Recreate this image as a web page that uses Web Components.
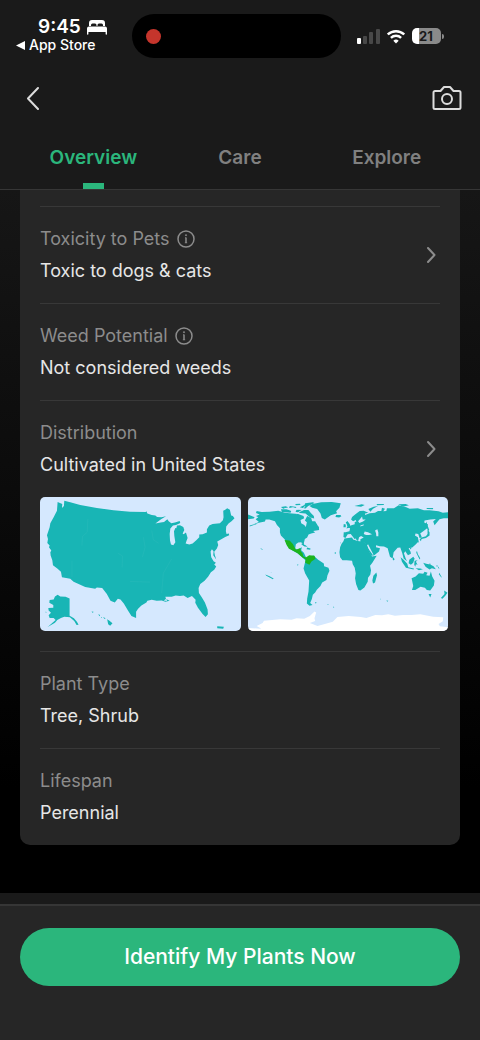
<!DOCTYPE html>
<html lang="en">
<head>
<meta charset="utf-8">
<meta name="viewport" content="width=device-width, initial-scale=1">
<title>Plant overview</title>
<style>
  body {
    margin: 0;
    background: #000;
    color: #e6e6e6;
    font-family: Inter, "Liberation Sans", sans-serif;
  }
</style>
</head>
<body>
<plant-page></plant-page>

<script>
const define = (name, html, setup) => {
  const template = document.createElement('template')
  template.innerHTML = html
  customElements.define(name, class extends HTMLElement {
    constructor () {
      super()
      this.attachShadow({ mode: 'open' })
      this.shadowRoot.appendChild(template.content.cloneNode(true))
    }

    connectedCallback () {
      if (setup) setup(this, this.shadowRoot)
    }
  })
}

define('status-bar', `
  <style>
    :host {
      display: grid;
      grid-template-columns: 1fr 209px 1fr;
      padding: 14px 8px 0 0;
      color: #fff;
    }
    .left {
      padding: 3px 0 0 16px;
    }
    .time {
      display: flex;
      align-items: center;
      gap: 6px;
      padding-left: 22px;
      font-size: 19px;
      font-weight: 600;
      line-height: 20px;
    }
    .back-app {
      display: flex;
      align-items: center;
      gap: 4px;
      font-size: 14px;
      font-weight: 500;
      line-height: 16px;
      color: inherit;
      text-decoration: none;
      white-space: nowrap;
    }
    .island {
      display: flex;
      align-items: center;
      height: 44px;
      padding-left: 14px;
      box-sizing: border-box;
      border-radius: 22px;
      background: #000;
    }
    .dot {
      width: 15px;
      height: 15px;
      border-radius: 50%;
      background: #c5352c;
    }
    .right {
      display: flex;
      align-items: center;
      gap: 7px;
      height: 44px;
      padding-left: 16px;
    }
    .battery {
      display: flex;
      align-items: center;
      gap: 1px;
    }
    .level {
      width: 29px;
      border-radius: 5px;
      background: linear-gradient(90deg, #fff 24%, #8a8a8a 24%);
      color: #1a1a1a;
      font-size: 13px;
      font-weight: 700;
      line-height: 16px;
      text-align: center;
    }
    .tip {
      width: 2px;
      height: 5px;
      border-radius: 0 2px 2px 0;
      background: #8a8a8a;
    }
  </style>
  <div class="left">
    <div class="time">
      <span>9:45</span>
      <svg width="20" height="15" viewBox="0 0 20 15" fill="#fff">
        <path d="M2 6V3a3 3 0 0 1 3-3h10a3 3 0 0 1 3 3v3h-2V5a1.500 1.500 0 0 0-1.500-1.500h-2.500A1.500 1.500 0 0 0 10.500 5v1h-1V5A1.500 1.500 0 0 0 8 3.500H5.500A1.500 1.500 0 0 0 4 5v1z"/>
        <path d="M2 6.500h16a2 2 0 0 1 2 2V14a.7.7 0 0 1-1.400 0v-2H1.400v2A.7.7 0 0 1 0 14V8.500a2 2 0 0 1 2-2z"/>
      </svg>
    </div>
    <a class="back-app" href="#">
      <svg width="9" height="9" viewBox="0 0 9 9" fill="#fff"><path d="M0 4.500 9 0v9z"/></svg>
      <span>App Store</span>
    </a>
  </div>
  <div class="island"><div class="dot"></div></div>
  <div class="right">
    <svg width="23" height="15" viewBox="0 0 23 15" fill="#484848">
      <rect y="9" width="4" height="6" rx="1" fill="#fff"/>
      <rect x="6" y="7" width="4" height="8" rx="1"/>
      <rect x="12" y="3" width="4" height="12" rx="1"/>
      <rect x="19" width="4" height="15" rx="1"/>
    </svg>
    <svg width="18" height="15" viewBox="0 0 18 15" fill="none" stroke="#fff" stroke-width="2.400">
      <path d="M.8 5.500a11.800 11.800 0 0 1 16.400 0M3.900 8.800a7.300 7.300 0 0 1 10.200 0"/>
      <path d="M9 14.500 6.300 11.700a3.900 3.900 0 0 1 5.400 0z" fill="#fff" stroke="none"/>
    </svg>
    <div class="battery"><div class="level">21</div><div class="tip"></div></div>
  </div>
`)

define('nav-bar', `
  <style>
    :host {
      display: flex;
      align-items: center;
      justify-content: space-between;
      height: 40px;
      padding: 20px 18px 0 22px;
    }
    button {
      display: flex;
      padding: 0;
      border: 0;
      background: none;
      color: #dcdcdc;
    }
    svg {
      fill: none;
      stroke: currentColor;
      stroke-width: 2;
      stroke-linecap: round;
      stroke-linejoin: round;
    }
  </style>
  <button aria-label="Back">
    <svg width="22" height="24" viewBox="0 0 22 24"><path d="M16 2 6 12.500 16 23"/></svg>
  </button>
  <button aria-label="Identify with camera">
    <svg width="30" height="26" viewBox="0 0 30 26">
      <path d="M3 6h5.500l3.500-4h6l3.500 4H27a1.500 1.500 0 0 1 1.500 1.500v15A1.500 1.500 0 0 1 27 24H3a1.500 1.500 0 0 1-1.500-1.500v-15A1.500 1.500 0 0 1 3 6z"/>
      <circle cx="15" cy="14" r="5"/>
    </svg>
  </button>
`)

define('tab-bar', `
  <style>
    :host {
      display: flex;
      padding: 0 20px;
      border-bottom: 1px solid #363636;
    }
    button {
      flex: 1;
      display: flex;
      flex-direction: column;
      align-items: center;
      padding: 28px 0 0;
      border: 0;
      background: none;
      color: #808080;
      font: 600 19px/24px Inter, "Liberation Sans", sans-serif;
    }
    button::after {
      content: "";
      width: 21px;
      height: 6px;
      margin-top: 13px;
    }
    button[aria-selected=true] {
      color: #2bb67c;
    }
    button[aria-selected=true]::after {
      background: #2bb67c;
    }
  </style>
  <button role="tab" aria-selected="true">Overview</button>
  <button role="tab" aria-selected="false">Care</button>
  <button role="tab" aria-selected="false">Explore</button>
`, (host, root) => {
  const tabs = [...root.querySelectorAll('button')]
  tabs.forEach(tab => {
    tab.onclick = () => tabs.forEach(t => t.setAttribute('aria-selected', t === tab))
  })
})

define('info-row', `
  <style>
    :host {
      display: block;
      padding: 20px 0;
      border-top: 1px solid #383838;
    }
    .head {
      display: flex;
      align-items: center;
      justify-content: space-between;
    }
    .text {
      display: flex;
      flex-direction: column;
      gap: 8px;
      font-size: 18px;
      line-height: 24px;
    }
    .label {
      display: flex;
      align-items: center;
      gap: 7px;
      color: #8c8c8c;
    }
    button {
      display: none;
      padding: 0;
      border: 0;
      background: none;
      color: #8c8c8c;
    }
    :host([info]) .info, :host([link]) .more {
      display: flex;
    }
    svg {
      fill: none;
      stroke: currentColor;
    }
  </style>
  <div class="head">
    <div class="text">
      <div class="label">
        <span class="name"></span>
        <button class="info" aria-label="More information">
          <svg width="18" height="18" viewBox="0 0 18 18" stroke-width="1.500">
            <circle cx="9" cy="9" r="8"/>
            <path d="M9 7.500V13"/>
            <path d="M8 7.800h1M7.800 12.800h2.400" stroke-width=".8"/>
            <circle cx="9" cy="5.200" r=".6" fill="currentColor" stroke-width=".8"/>
          </svg>
        </button>
      </div>
      <div class="value"></div>
    </div>
    <button class="more" aria-label="Open">
      <svg width="18" height="18" viewBox="0 0 18 18" stroke-width="2" stroke-linecap="round" stroke-linejoin="round">
        <path d="m6 2 6.500 7L6 16"/>
      </svg>
    </button>
  </div>
  <slot></slot>
`, (host, root) => {
  root.querySelector('.name').textContent = host.getAttribute('label')
  root.querySelector('.value').textContent = host.getAttribute('value')
})

const mapStyle = `
  <style>
    :host {
      display: block;
      flex: 1;
    }
    svg {
      display: block;
      width: 100%;
      border-radius: 5px;
      background: #d5e8fe;
      fill: #18b5b5;
    }
  </style>
`

define('usa-map', mapStyle + `
  <svg viewBox="9 9 603 404" role="img" aria-label="Map of the United States">
    <path d="M82 20 100 25 130 33 180 42 230 49 280 53 327 54 329 52 332 59 345 63 356 65 361 69 374 70 388 67 373 76 360 86 356 89 372 86 382 84 392 76 396 82 404 88 415 86 429 81 431 87 418 93 409 95 401 104 399 120 400 140 403 152 410 154 416 145 413 126 412 112 416 102 419 103 421 95 430 94 440 99 443 108 438 119 441 121 448 116 453 132 450 140 447 149 458 152 468 149 479 139 488 130 488 122 498 121 511 116 511 106 518 95 528 90 550 88 559 79 561 70 560 50 566 47 572 43 580 47 584 65 589 66 594 73 585 82 576 89 569 98 568 112 570 120 577 119 578 124 566 129 553 137 542 143 545 153 541 164 533 174 535 184 539 197 530 184 531 172 526 166 522 173 524 190 531 202 538 207 533 212 539 218 533 228 523 235 515 248 504 261 491 271 486 283 487 298 496 311 505 326 513 347 514 362 507 370 498 361 484 342 476 327 477 318 466 307 453 313 441 305 430 307 417 305 405 309 386 309 388 316 399 321 386 324 375 320 360 321 345 318 332 321 329 326 314 335 304 345 298 354 298 373 284 367 274 351 261 329 251 317 243 315 234 326 221 321 210 301 196 283 180 281 175 285 145 280 110 264 100 255 75 250 72 234 61 224 48 214 46 199 41 185 40 175 43 170 36 160 38 155 31 147 33 135 30 124 38 100 40 88 50 70 60 50 62 24 76 30 75 42 81 36Z"/>
    <path d="M98 314V366L111 374 120 384 125 393 119 394 112 382 99 371 82 369 72 373 61 379 54 387 32 400 56 379 50 373 38 373 35 365 42 357 35 350 34 343 49 342 49 334 37 327 38 319 50 317 54 308 62 303 70 308 86 309Z"/>
    <path d="m211 377 7 4 9 8-7 7-6-4zM198 371l8 2-2 3zM184 362l6 2-2 4zM164 353l6 1-2 4zM192 370l4 1-2 2zM542 398l20 1-2 6-18-1zM25 354l4 1-2 2z"/>
    <g fill="none" stroke="#33bcbc">
      <path d="m153 75-2 40-14 12-2 28m-30 45v50M243 178l14 8-1 35M320 130l5 30-8 30M280 263l60 2M405 195l-25 43-5 60M345 110l5 28 16 10"/>
    </g>
    <path d="m389 315-8 5 10 2z" fill="#d5e8fe"/>
  </svg>
`)

define('world-map', mapStyle + `
  <svg viewBox="9 9 603 404" role="img" aria-label="World map">
    <path d="M35 51 50 54 74 53 100 50 120 56 142 59 160 60 176 66 178 73 167 78 169 88 178 93 183 99 186 85 180 80 187 66 199 72 202 82 211 82 220 97 223 108 205 111 211 116 199 119 191 122 187 131 180 135 177 147 178 156 169 145 160 146 153 151 151 164 158 168 165 163 171 160 169 169 177 177 184 192 191 190 206 185 220 198 237 209 238 217 251 222 254 231 248 244 245 259 232 266 227 277 216 288 211 296 204 303 201 316 196 328 203 334 194 336 186 329 187 314 191 293 193 260 181 239 176 224 179 212 182 199 175 193 158 178 143 170 134 162 119 136 108 125 105 116 105 103 96 93 90 82 73 77 62 77 60 83 45 86 26 91 42 84 32 76 40 70 33 66 44 62 33 57Z"/>
    <path d="M203 30 229 25 261 24 288 28 284 41 274 52 277 58 258 64 240 77 231 72 227 59 217 45 202 41 194 36Z"/>
    <path d="m181 28 23-3 5 2-19 9-9 8-16-4 14-7zM155 47l20 1 16 0 7 9 9 9 1 8-12-3-7-6-7-6-17-2-13-4zM108 46l18 0 13 5-2 5-26-2zM135 36l20 3-3 3-20-1zM108 39l14-2 8 3-15 4zM151 30l14-1 2 4-14 1zM274 63l13 0 3 4-7 4-11-2zM210 101l12-3 1 9-10 0zM170 149l12 5 6 5-9-1-9-6zM187 161l10 3-1 4-11-2z"/>
    <path d="M302 115 314 112 316 103 308 100 320 94 330 91 330 84 335 83 333 78 325 82 319 77 322 69 332 61 345 51 357 50 371 56 361 59 361 63 375 58 391 56 400 51 410 51 412 41 421 44 416 52 425 51 427 43 448 43 462 34 485 40 495 44 520 43 538 49 555 49 582 52 595 56 612 55 612 73 598 73 585 76 577 86 570 94 566 83 574 75 557 77 540 80 539 86 550 91 547 104 531 116 527 118 532 131 525 132 521 120 513 119 511 125 520 130 522 142 514 151 503 161 492 163 498 174 499 180 490 184 482 172 478 178 483 193 487 202 477 194 473 178 467 161 459 162 447 175 444 194 436 189 429 163 418 158 405 157 394 154 394 160 406 163 403 173 389 184 378 186 371 169 362 154 362 147 347 144 347 136 357 131 349 126 343 130 340 142 333 135 328 123 323 116 334 129 330 136 318 120 309 121 302 132 296 129 297 115Z"/>
    <path d="m346 75 6-7 2 9 9 0-8 6-11 4-4-5z" fill="#d5e8fe"/>
    <path d="m357 120 3-7 10 2 12 6-9 2-9 0zM391 110l7-4 3 10 0 11-6 0-1-9zM370 151l16 31-1 2-14-19-4-10z" fill="#d5e8fe"/>
    <path d="M299 134 322 131 325 137 339 141 350 143 362 146 369 160 377 181 382 188 396 186 383 207 376 216 379 229 377 242 370 252 369 264 359 281 347 290 341 289 334 271 331 253 333 239 330 222 324 211 322 201 306 199 293 199 286 190 284 175 286 160 290 150 296 142Z"/>
    <path d="m395 236 2 8-6 22-6 3-2-9 3-14zM308 81l7 9 3 10-13 4 3-6-2-7-3-5zM297 90l6 2 0 8-7 0zM371 45l16-7 13-2-15 8-8 9zM329 36l22-5 9 2-11 5zM396 30l22 0-1 3-20 1zM461 31l22-1 10 4-18 4zM545 42l21 0-1 4-17-1zM545 83l5 14 4 11-3 3-8-18zM549 106l6 9 0 10-11 7-13 3-2 7-4-5 6-6 13-4 5-7zM446 190l4 6-3 4-3-4zM523 139l-1 7-3 0zM496 162l5 1-4 4z"/>
    <path d="m468 190 9 8 11 12 3 10 17 4-1 3-23-5-12-18zM494 198l12-9 4 5-4 13-7 6-7-5zM510 201l9-2-5 5 5 9-5-2-2 8-3-6zM517 171l3 10 7 12-2 4-10-20zM536 207l9 3 12 2 10 5 7 9-12-3-7 4-12-8zM513 223l14 1 8 2-12 3zM556 207l3 8-4-2zM580 217l5 7-4-1zM574 216l6-1-2 4z"/>
    <path d="M501 253 513 248 523 238 536 240 540 234 549 237 545 244 555 246 559 233 563 248 570 261 568 275 557 290 547 289 541 282 528 279 512 289 502 289 506 277Z"/>
    <path d="m552 301 9 0-4 10zM599 290l10 7-6 8-9 10-5-2 11-12zM584 237l7 12 0 3-8-11zM210 325l6 2-4 2zM248 331l4 1-3 2zM425 320l6 1-3 3zM406 315l3 1-2 1zM265 339h3v2h-3zM45 162l9 5-3 1zM61 242l13 5 12 7-2 2-20-10zM77 235l3 1-1 1zM157 211l4 2-3 3zM285 147l4-1-1 2zM270 175h3v5h-3zM14 95l20-6 0 2-20 7zM9 62l20 8-3 4-17 2z"/>
    <path fill="none" stroke="#d5e8fe" stroke-width="3" d="m119 43 13 2 12-4 14 5M155 59l13-8 9-4M180 37l-6 8 18 2M347 96l10-3"/>
    <path fill="#1db41d" d="m119 138 15 2 10 10 5 10 4 8 8-3 5-2 2 10 5 5 2 9 8 4 10-7 16 2 3 9-12 8-6 10-13-6 1-11-9-5-15-13-15-8-11-5-7-12z"/>
    <path fill="#fff" d="M45 413 47 404 35 397 53 388 57 381 106 377 140 378 155 374 178 375 195 367 209 353 214 356 209 374 211 382 195 388 218 397 240 391 264 384 278 370 312 367 348 370 365 373 392 364 412 365 431 362 451 366 476 364 501 364 527 362 566 369 596 371 595 383 582 391 586 398 612 401V413ZM9 413V403L46 405V413Z"/>
  </svg>
`)

define('call-to-action', `
  <style>
    :host {
      display: block;
      border-top: 11px solid #1a1a1a;
      background: #262626;
    }
    .inner {
      padding: 22px 20px 54px;
      border-top: 2px solid #363636;
    }
    button {
      display: block;
      width: 100%;
      padding: 17px;
      border: 0;
      border-radius: 29px;
      background: #2bb67c;
      color: #fff;
      font: 500 21px/24px Inter, "Liberation Sans", sans-serif;
    }
  </style>
  <div class="inner"><button><slot></slot></button></div>
`)

define('plant-page', `
  <style>
    :host {
      display: flex;
      flex-direction: column;
      min-height: 100vh;
    }
    header {
      background: #1a1a1a;
    }
    main {
      flex: 1;
      padding: 0 20px 47px;
      background: linear-gradient(#161616, #000 85%);
    }
    .card {
      padding: 16px 20px 0;
      border-radius: 0 0 10px 10px;
      background: #262626;
    }
    /* the maps run a little past the dividers */
    .maps {
      display: flex;
      gap: 7px;
      margin: 20px -8px 0 0;
    }
  </style>
  <header>
    <status-bar></status-bar>
    <nav-bar></nav-bar>
    <tab-bar role="tablist"></tab-bar>
  </header>
  <main>
    <div class="card">
      <info-row label="Toxicity to Pets" value="Toxic to dogs &amp; cats" info link></info-row>
      <info-row label="Weed Potential" value="Not considered weeds" info></info-row>
      <info-row label="Distribution" value="Cultivated in United States" link>
        <div class="maps">
          <usa-map></usa-map>
          <world-map></world-map>
        </div>
      </info-row>
      <info-row label="Plant Type" value="Tree, Shrub"></info-row>
      <info-row label="Lifespan" value="Perennial"></info-row>
    </div>
  </main>
  <call-to-action>Identify My Plants Now</call-to-action>
`)
</script>
</body>
</html>
